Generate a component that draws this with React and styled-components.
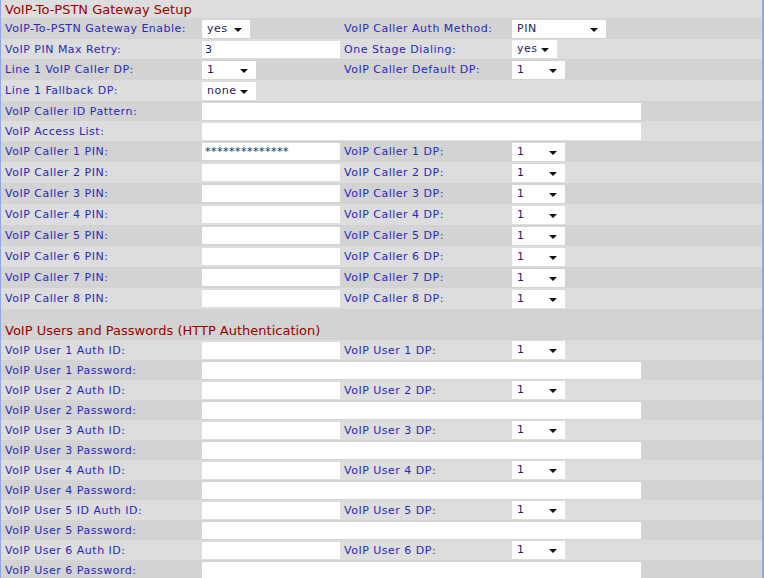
import React from 'react';
import styled, { createGlobalStyle } from 'styled-components';

const GlobalStyle = createGlobalStyle`
  html, body {
    margin: 0;
    padding: 0;
    background: #dddddd;
  }
  body {
    font-family: "DejaVu Sans", Verdana, sans-serif;
    font-size: 11px;
    letter-spacing: 0.5px;
  }
`;

const Panel = styled.div`
  width: 764px;
  height: 578px;
  overflow: hidden;
  box-sizing: border-box;
  border-left: 1px solid #8fa9e0;
  border-right: 2px solid #8fa9e0;
  background: #dddddd;
`;

const Row = styled.div`
  display: grid;
  grid-template-columns: 201px 141px 169px 1fr;
  align-items: center;
  height: ${(p) => p.$h || 20}px;
  background: ${(p) => (p.$dark ? '#d3d3d3' : '#dddddd')};
`;

const SectionTitle = styled.div`
  grid-column: 1 / -1;
  padding-left: 4px;
  color: #990000;
  font-size: 13px;
  letter-spacing: 0;
  line-height: 1;
`;

const Label = styled.div`
  padding-left: ${(p) => (p.$second ? '1px' : '4px')};
  color: #2828b8;
  white-space: nowrap;
`;

const TextBox = styled.div`
  box-sizing: border-box;
  height: 17px;
  width: ${(p) => (p.$wide ? 439 : 138)}px;
  grid-column: ${(p) => (p.$wide ? '2 / -1' : 'auto')};
  background: #ffffff;
  color: #1c1c5c;
  padding-left: 3px;
  line-height: 17px;
  white-space: nowrap;
  overflow: hidden;
`;

const SelectBox = styled.div`
  position: relative;
  box-sizing: border-box;
  height: 18px;
  width: ${(p) => p.$w}px;
  background: #ffffff;
  color: #1c1c5c;
  padding-left: 5px;
  line-height: 18px;

  &::after {
    content: '';
    position: absolute;
    right: 8px;
    top: 8px;
    border-left: 4px solid transparent;
    border-right: 4px solid transparent;
    border-top: 4px solid #111111;
  }
`;

const Cell = styled.div`
  display: flex;
  align-items: center;
`;

const Select = ({ value, w }) => (
  <Cell>
    <SelectBox $w={w}>{value}</SelectBox>
  </Cell>
);

const Empty = () => <div />;

const callers = [1, 2, 3, 4, 5, 6, 7, 8];
const users = [1, 2, 3, 4, 5, 6];

export default function App() {
  let idx = 0;
  const next = () => {
    idx += 1;
    return idx % 2 === 1;
  };

  return (
    <>
      <GlobalStyle />
      <Panel>
        <Row $h={18}>
          <SectionTitle>VoIP-To-PSTN Gateway Setup</SectionTitle>
        </Row>
        <Row $h={21} $dark={next()}>
          <Label>VoIP-To-PSTN Gateway Enable:</Label>
          <Select value="yes" w={48} />
          <Label $second>VoIP Caller Auth Method:</Label>
          <Select value="PIN" w={94} />
        </Row>
        <Row $h={20} $dark={next()}>
          <Label>VoIP PIN Max Retry:</Label>
          <TextBox>3</TextBox>
          <Label $second>One Stage Dialing:</Label>
          <Select value="yes" w={45} />
        </Row>
        <Row $h={21} $dark={next()}>
          <Label>Line 1 VoIP Caller DP:</Label>
          <Select value="1" w={54} />
          <Label $second>VoIP Caller Default DP:</Label>
          <Select value="1" w={53} />
        </Row>
        <Row $h={21} $dark={next()}>
          <Label>Line 1 Fallback DP:</Label>
          <Select value="none" w={54} />
        </Row>
        <Row $h={20} $dark={next()}>
          <Label>VoIP Caller ID Pattern:</Label>
          <TextBox $wide />
        </Row>
        <Row $h={20} $dark={next()}>
          <Label>VoIP Access List:</Label>
          <TextBox $wide />
        </Row>
        {callers.map((n) => (
          <Row key={n} $h={21} $dark={next()}>
            <Label>VoIP Caller {n} PIN:</Label>
            <TextBox>{n === 1 ? '**************' : ''}</TextBox>
            <Label $second>VoIP Caller {n} DP:</Label>
            <Select value="1" w={53} />
          </Row>
        ))}
        <Row $h={11} $dark>
          <Empty />
        </Row>
        <Row $h={20} $dark>
          <SectionTitle>VoIP Users and Passwords (HTTP Authentication)</SectionTitle>
        </Row>
        {users.map((n) => (
          <React.Fragment key={n}>
            <Row $h={20}>
              <Label>{n === 5 ? 'VoIP User 5 ID Auth ID:' : `VoIP User ${n} Auth ID:`}</Label>
              <TextBox />
              <Label $second>VoIP User {n} DP:</Label>
              <Select value="1" w={53} />
            </Row>
            <Row $h={20} $dark>
              <Label>VoIP User {n} Password:</Label>
              <TextBox $wide />
            </Row>
          </React.Fragment>
        ))}
      </Panel>
    </>
  );
}
